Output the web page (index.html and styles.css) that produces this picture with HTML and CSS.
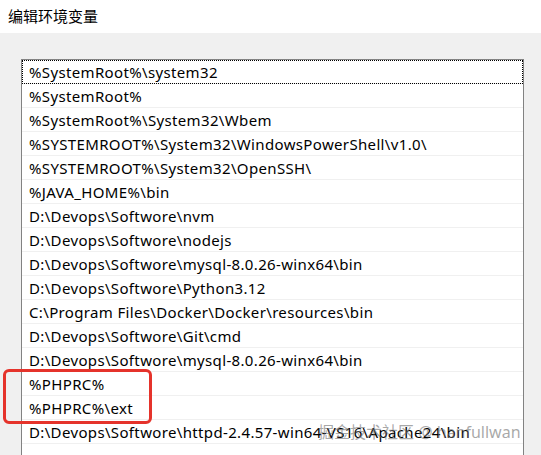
FILE: index.html
```html
<!DOCTYPE html>
<html>
	<head>
		<meta charset="UTF-8">
		<title>编辑环境变量</title>
		<link rel="stylesheet" href="styles.css">
	</head>
	<body>
		<div class="title">编辑环境变量</div>
		<div class="panel">
			<ul class="list">
				<li class="focus">%SystemRoot%\system32</li>
				<li>%SystemRoot%</li>
				<li>%SystemRoot%\System32\Wbem</li>
				<li>%SYSTEMROOT%\System32\WindowsPowerShell\v1.0\</li>
				<li>%SYSTEMROOT%\System32\OpenSSH\</li>
				<li>%JAVA_HOME%\bin</li>
				<li>D:\Devops\Softwore\nvm</li>
				<li>D:\Devops\Softwore\nodejs</li>
				<li>D:\Devops\Softwore\mysql-8.0.26-winx64\bin</li>
				<li>D:\Devops\Softwore\Python3.12</li>
				<li>C:\Program Files\Docker\Docker\resources\bin</li>
				<li>D:\Devops\Softwore\Git\cmd</li>
				<li>D:\Devops\Softwore\mysql-8.0.26-winx64\bin</li>
				<li>%PHPRC%</li>
				<li>%PHPRC%\ext</li>
				<li>D:\Devops\Softwore\httpd-2.4.57-win64-VS16\Apache24\bin</li>
				<li></li>
			</ul>
		</div>
		<!-- 标注框 -->
		<div class="mark"></div>
		<div class="watermark">掘金技术社区 @ hanfullwan</div>
	</body>
</html>
```

FILE: styles.css
```css
html, body {
	margin: 0;
	padding: 0;
	height: 100%;
	overflow: hidden;
}

body {
	background: #f0f0f0;
	font-family: "Noto Sans", "Noto Sans CJK SC", sans-serif;
	color: #000;
	position: relative;
}

.title {
	height: 33px;
	background: #fff;
	padding-left: 8px;
	font-size: 15px;
	line-height: 33px;
}

.panel {
	padding: 26px 0 0 21px;
}

.list {
	list-style: none;
	margin: 0;
	padding: 0;
	width: 501px;
	height: 420px;
	background: #fff;
	border: 1px solid #828282;
}

.list li {
	box-sizing: border-box;
	height: 24px;
	padding-left: 7px;
	border-bottom: 1px solid #f0f0f0;
	font-size: 15px;
	letter-spacing: 0.35px;
	line-height: 25px;
	white-space: nowrap;
}

.list li.focus {
	outline: 1px dotted #000;
	outline-offset: -1px;
}

.mark {
	position: absolute;
	left: 3px;
	top: 369px;
	width: 143px;
	height: 49px;
	border: 3px solid #e5332b;
	border-radius: 6px;
}

.watermark {
	position: absolute;
	left: 318px;
	top: 422px;
	font-size: 16px;
	line-height: 21px;
	color: rgba(110, 110, 110, 0.6);
	white-space: nowrap;
}
```
